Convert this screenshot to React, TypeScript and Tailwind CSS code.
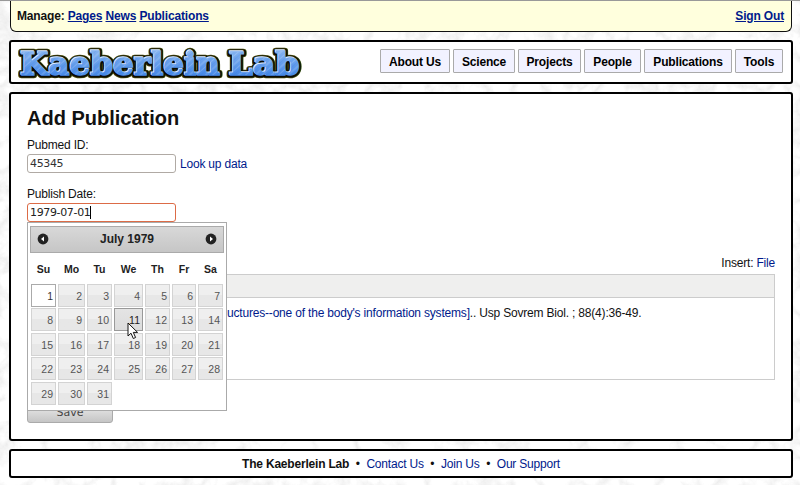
import React from "react";

const NAV: [string, string][] = [
  ["About Us", "w-[70px]"],
  ["Science", "w-[62px]"],
  ["Projects", "w-[63px]"],
  ["People", "w-[57px]"],
  ["Publications", "w-[88px]"],
  ["Tools", "w-[48px]"],
];
const DAYS = ["Su", "Mo", "Tu", "We", "Th", "Fr", "Sa"];

function Paper() {
  return (
    <svg className="absolute inset-0 -z-10" width="800" height="485" aria-hidden="true">
      <filter id="paper" x="0" y="0" width="100%" height="100%" colorInterpolationFilters="sRGB">
        <feTurbulence type="turbulence" baseFrequency="0.035" numOctaves="5" seed="8" />
        <feColorMatrix values=".2 0 0 0 .925  .2 0 0 0 .925  .2 0 0 0 .925  0 0 0 0 1" />
      </filter>
      <rect width="800" height="485" filter="url(#paper)" />
    </svg>
  );
}

function LogoWords(props: React.SVGProps<SVGGElement>) {
  return (
    <g {...props}>
      <text x="9" y="32.5" textLength="200" lengthAdjust="spacingAndGlyphs">Kaeberlein</text>
      <text x="217.5" y="32.5" textLength="71" lengthAdjust="spacingAndGlyphs">Lab</text>
    </g>
  );
}

function Logo() {
  return (
    <svg
      width="300"
      height="40"
      viewBox="0 0 300 40"
      className="block overflow-visible font-['DejaVu_Serif',serif] text-[32px] leading-[36px] font-bold tracking-normal"
    >
      <defs>
        <linearGradient id="blue" x1="0" y1="8" x2="0" y2="34" gradientUnits="userSpaceOnUse">
          <stop offset="0" stopColor="#86b4f0" />
          <stop offset="1" stopColor="#4387e6" />
        </linearGradient>
        <pattern id="brush" width="11" height="11" patternUnits="userSpaceOnUse" patternTransform="rotate(48)">
          <rect width="2" height="11" fill="#fff" opacity=".14" />
          <rect x="5" width="1" height="11" fill="#fff" opacity=".18" />
          <rect x="8" width="1" height="11" fill="#2468d0" opacity=".12" />
        </pattern>
        <filter id="glow" x="-5%" y="-20%" width="110%" height="140%">
          <feGaussianBlur stdDeviation="0.7" />
        </filter>
      </defs>
      <LogoWords fill="#4a4a08" stroke="#4a4a08" strokeWidth="6.5" strokeLinejoin="round" filter="url(#glow)" />
      <LogoWords fill="#0b0b04" stroke="#0b0b04" strokeWidth="5" strokeLinejoin="round" />
      <LogoWords fill="#dcecff" stroke="#dcecff" strokeWidth="1.3" transform="translate(-.5 -.4)" />
      <LogoWords fill="url(#blue)" stroke="url(#blue)" strokeWidth="1.3" transform="translate(.3 .3)" />
      <LogoWords fill="url(#brush)" />
    </svg>
  );
}

function Arrow({ next = false }: { next?: boolean }) {
  return (
    <svg width="12" height="12" viewBox="0 0 12 12">
      <circle cx="6" cy="6" r="5.4" fill="#222" />
      <path d={next ? "M5 3.5 8 6 5 8.5Z" : "M7 3.5 4 6 7 8.5Z"} fill="#fff" />
    </svg>
  );
}

function cellLook(day: number) {
  if (day === 1) return "border-[#aaa] bg-white text-[#333]";
  if (day === 11) return "border-[#999] bg-linear-to-b from-[#e4e4e4] to-[#dcdcdc] text-[#212121]";
  return "border-[#d3d3d3] bg-linear-to-b from-[#efefef] from-50% to-[#e7e7e7] to-50% text-[#555]";
}

function Calendar() {
  return (
    <div className="absolute left-0 top-[19px] z-10 h-[189px] w-[200px] border border-[#aaa] bg-white px-[2px] pt-[3px] tracking-normal">
      <div className="flex h-[27px] w-[194px] items-center justify-between border border-[#aaa] bg-linear-to-b from-[#d8d8d8] to-[#c6c6c6] px-[6px] pb-px text-[12px] font-bold text-[#222]">
        <Arrow />
        <span>July 1979</span>
        <Arrow next />
      </div>
      <div className="ml-px mt-[4px] grid grid-cols-[25px_27px_25px_29px_25px_24px_25px] gap-x-[2px] text-center text-[10.5px] font-bold leading-[24px] text-[#222]">
        {DAYS.map((d) => (
          <span key={d}>{d}</span>
        ))}
      </div>
      <div className="ml-px mt-[3px] grid auto-rows-[23px] grid-cols-[25px_27px_25px_29px_25px_24px_25px] gap-x-[2px] gap-y-[1.4px] text-right text-[10.5px] leading-[23px]">
        {Array.from({ length: 31 }, (_, i) => i + 1).map((d) => (
          <span key={d} className={`border pr-[2px] ${cellLook(d)}`}>
            {d}
          </span>
        ))}
      </div>
      <svg className="absolute left-[99px] top-[99px]" width="12" height="18" viewBox="0 0 12 18">
        <path d="M1 1v13l3-2.8L6.3 16.5l2.3-1L6.3 10.4H10.6Z" fill="#fff" stroke="#111" />
      </svg>
    </div>
  );
}

export default function App() {
  return (
    <div className="relative isolate h-[485px] w-[800px] overflow-hidden border-t border-[#999] pl-[9px] font-['Liberation_Sans',Arial,sans-serif] text-[12px] leading-[14px] tracking-[-0.2px] text-[#111]">
      <Paper />
      <div className="ml-px flex h-[31px] w-[782px] items-center justify-between rounded-b-[6px] border border-t-0 border-[#111] bg-[#ffffdd] pl-[6px] pr-[7px] font-bold tracking-[-0.16px]">
        <div>
          Manage: <a className="text-[#001a8c] underline">Pages</a> <a className="text-[#001a8c] underline">News</a>{" "}
          <a className="text-[#001a8c] underline">Publications</a>
        </div>
        <a className="text-[#001a8c] underline">Sign Out</a>
      </div>

      <header className="mt-[8px] flex h-[44px] w-[784px] justify-between rounded-[3px] border-2 border-black bg-white pr-[8px]">
        <Logo />
        <nav className="mt-[7px] flex gap-[3px] tracking-[-0.16px] text-black">
          {NAV.map(([name, width]) => (
            <a
              key={name}
              className={`flex h-[24px] shrink-0 items-center justify-center rounded-[1px] border border-[#aaa] bg-[#f2f2ff] pt-px font-bold ${width}`}
            >
              {name}
            </a>
          ))}
        </nav>
      </header>

      <main className="mt-[8px] h-[349px] w-[784px] rounded-[3px] border-2 border-black bg-white pl-[16px] pt-[13px]">
        <h1 className="text-[20px] font-bold leading-[23px] tracking-normal">Add Publication</h1>
        <div className="mt-[8px]">Pubmed ID:</div>
        <div className="mt-[2px] flex items-center gap-[4px]">
          <div className="flex h-[19px] w-[149px] items-center rounded-[3px] border border-[#b0aaa4] px-[2px] font-['DejaVu_Sans',sans-serif] text-[11px] tracking-[-0.35px] text-[#333]">
            45345
          </div>
          <a className="text-[#001a8c]">Look up data</a>
        </div>
        <div className="mt-[14px]">Publish Date:</div>
        <div className="relative mt-[2px]">
          <div className="flex h-[19px] w-[149px] items-center rounded-[3px] border border-[#dc6b46] px-[2px] font-['DejaVu_Sans',sans-serif] text-[11px] tracking-[-0.35px] text-[#222]">
            1979-07-01
            <span className="h-[13px] w-px bg-black" />
          </div>
          <Calendar />
        </div>
        <div className="mt-[34px] w-[748px] text-right">
          Insert: <a className="text-[#001a8c]">File</a>
        </div>
        <div className="mt-[4px] h-[106px] w-[748px] border border-[#ccc]">
          <div className="h-[23px] border-b border-[#ccc] bg-[#efefee]" />
          <div className="pl-[199px] pt-[8px] tracking-[-0.19px]">
            <a className="text-[#001a8c]">uctures--one of the body's information systems]</a>.. Usp Sovrem Biol. ; 88(4):36-49.
          </div>
        </div>
        <div className="mt-[22px] flex h-[21px] w-[86px] items-center justify-center rounded-[3px] border border-[#aaa] bg-linear-to-b from-[#eee] to-[#c5c5c5] font-['DejaVu_Sans',sans-serif] text-[11px] tracking-normal text-[#444]">
          Save
        </div>
      </main>

      <footer className="mt-[8px] flex h-[29px] w-[784px] items-center justify-center gap-[6.6px] rounded-[3px] border-2 border-black bg-white">
        <b>The Kaeberlein Lab</b>
        <span>•</span>
        <a className="text-[#001a8c]">Contact Us</a>
        <span>•</span>
        <a className="text-[#001a8c]">Join Us</a>
        <span>•</span>
        <a className="text-[#001a8c]">Our Support</a>
      </footer>
    </div>
  );
}
